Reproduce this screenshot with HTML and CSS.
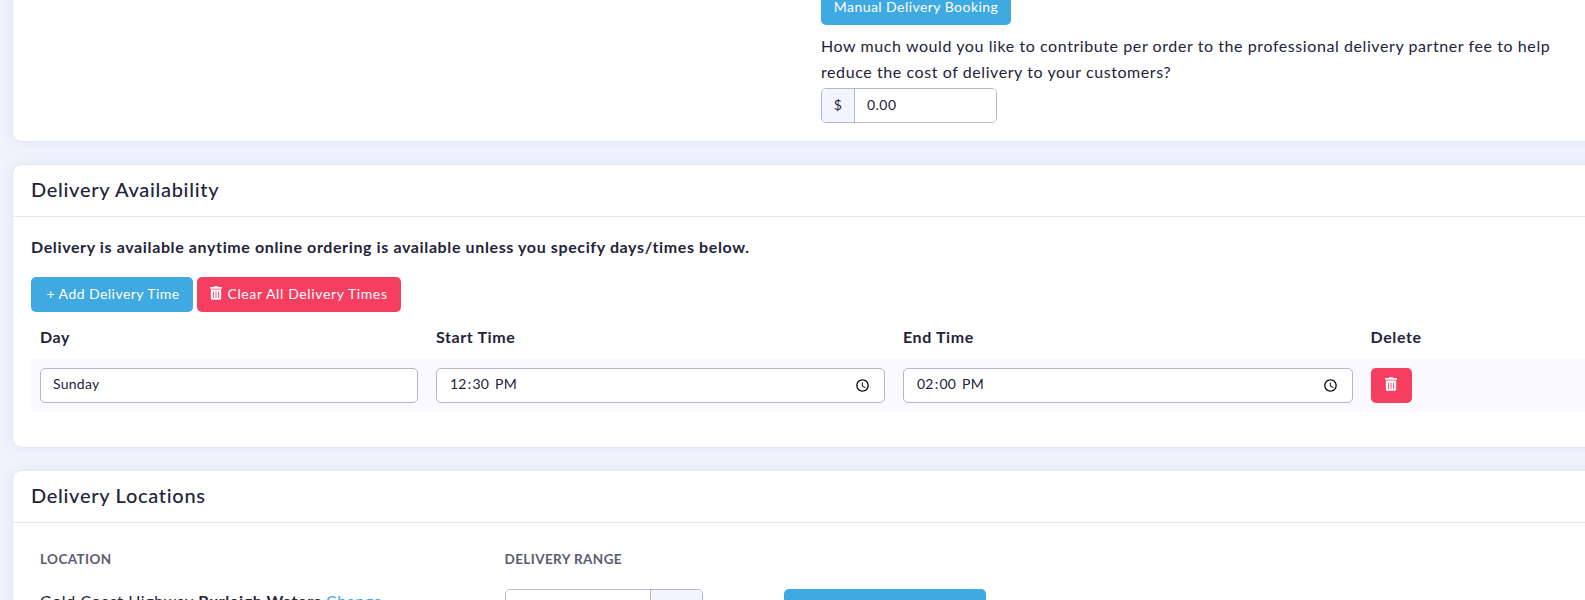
FILE: index.html
```html
<!DOCTYPE html>
<html lang="en">
<head>
<meta charset="utf-8">
<title>Delivery Settings</title>
<link rel="stylesheet" href="styles.css">
</head>
<body>
<main class="page">
  <section class="card card-top">
    <div class="top-body">
      <div class="top-col">
        <button class="btn btn-blue btn-manual">Manual Delivery Booking</button>
        <p class="contribute">How much would you like to contribute per order to the professional delivery partner fee to help reduce the cost of delivery to your customers?</p>
        <div class="input-group">
          <span class="addon">$</span>
          <input class="addon-input" type="text" value="0.00">
        </div>
      </div>
    </div>
  </section>

  <section class="card">
    <h2 class="card-title">Delivery Availability</h2>
    <div class="card-body avail-body">
      <p class="lead">Delivery is available anytime online ordering is available unless you specify days/times below.</p>
      <div class="actions">
        <button class="btn btn-blue btn-add">+ Add Delivery Time</button>
        <button class="btn btn-red btn-clear">
          <svg class="trash" viewBox="0 0 448 512"><path d="M32 464a48 48 0 0 0 48 48h288a48 48 0 0 0 48-48V128H32zm272-256a16 16 0 0 1 32 0v224a16 16 0 0 1-32 0zm-96 0a16 16 0 0 1 32 0v224a16 16 0 0 1-32 0zm-96 0a16 16 0 0 1 32 0v224a16 16 0 0 1-32 0zM432 32H312l-9.4-18.7A24 24 0 0 0 281.1 0H166.8a23.72 23.72 0 0 0-21.4 13.3L136 32H16A16 16 0 0 0 0 48v32a16 16 0 0 0 16 16h416a16 16 0 0 0 16-16V48a16 16 0 0 0-16-16z"/></svg>
          Clear All Delivery Times
        </button>
      </div>
      <div class="grid grid-head">
        <div>Day</div>
        <div>Start Time</div>
        <div>End Time</div>
        <div>Delete</div>
      </div>
      <div class="grid grid-row">
        <input class="field" type="text" value="Sunday">
        <input class="field" type="time" value="12:30">
        <input class="field" type="time" value="14:00">
        <button class="btn btn-red btn-del">
          <svg class="trash" viewBox="0 0 448 512"><path d="M32 464a48 48 0 0 0 48 48h288a48 48 0 0 0 48-48V128H32zm272-256a16 16 0 0 1 32 0v224a16 16 0 0 1-32 0zm-96 0a16 16 0 0 1 32 0v224a16 16 0 0 1-32 0zm-96 0a16 16 0 0 1 32 0v224a16 16 0 0 1-32 0zM432 32H312l-9.4-18.7A24 24 0 0 0 281.1 0H166.8a23.72 23.72 0 0 0-21.4 13.3L136 32H16A16 16 0 0 0 0 48v32a16 16 0 0 0 16 16h416a16 16 0 0 0 16-16V48a16 16 0 0 0-16-16z"/></svg>
        </button>
      </div>
    </div>
  </section>

  <section class="card">
    <h2 class="card-title">Delivery Locations</h2>
    <div class="card-body loc-body">
      <div class="loc-head">
        <div>LOCATION</div>
        <div>DELIVERY RANGE</div>
      </div>
      <div class="loc-row">
        <div class="loc-name">Gold Coast Highway <strong>Burleigh Waters</strong> <a class="link" href="#">Change</a></div>
        <div class="range">
          <input class="range-input" type="text" value="">
          <span class="range-addon">km</span>
        </div>
        <button class="btn btn-blue btn-save">+ Add Delivery Location</button>
      </div>
    </div>
  </section>
</main>
</body>
</html>
```
FILE: styles.css
```css
* { box-sizing: border-box; }
html, body { margin: 0; height: 600px; overflow: hidden; }
body {
  background: #f1f3fd;
  font-family: "Lato", "Liberation Sans", sans-serif;
  font-size: 16px;
  letter-spacing: .58px;
  color: #23233a;
}
.page {
  width: 1640px;
  padding-left: 12px;
  margin-top: -170px;
}
.card {
  background: #fff;
  border: 1px solid #e6e7f5;
  border-radius: 10px;
  box-shadow: 0 0 18px rgba(80, 90, 170, 0.08);
  margin-bottom: 22px;
}
.card-top { height: 312px; }
.top-body { height: 100%; display: flex; justify-content: flex-end; align-items: flex-end; padding: 0 0 18px 0; }
.top-col { width: 818px; }
.btn {
  border: 0;
  border-radius: 5px;
  color: #fff;
  font: inherit;
  font-size: 14px;
  letter-spacing: .45px;
  height: 35px;
  padding: 0 0 2px;
  white-space: nowrap;
  display: inline-flex;
  align-items: center;
  justify-content: center;
}
.btn-blue { background: #3fa9e1; }
.btn-red { background: #f63e60; }
.btn-manual { width: 190px; display: flex; }
.contribute { margin: 8px 0 3px; width: 740px; line-height: 26px; }
.input-group { display: flex; width: 176px; height: 35px; border: 1px solid #b5b5cf; border-radius: 5px; overflow: hidden; font-size: 14px; }
.addon { width: 33px; background: #f2f5fe; border-right: 1px solid #b5b5cf; display: flex; align-items: center; justify-content: center; padding-bottom: 2px; }
.addon-input { border: 0; flex: 1; min-width: 0; padding: 0 12px 2px; font: inherit; letter-spacing: .45px; color: inherit; outline: 0; }
.card-title {
  margin: 0;
  height: 52px;
  line-height: 48px;
  padding-left: 18px;
  font-size: 20px;
  font-weight: 500;
  border-bottom: 1px solid #e6e7f5;
  letter-spacing: .7px;
}
.card-body { padding: 0 18px; }
.avail-body { height: 230px; }
.lead { margin: 0; padding-top: 20px; font-weight: 700; line-height: 20px; letter-spacing: .62px; }
.actions { display: flex; gap: 4px; margin-top: 20px; }
.btn-add { width: 162px; padding-left: 2px; }
.btn-clear { width: 204px; gap: 5px; letter-spacing: .62px; }
.trash { width: 12px; height: 14px; fill: #fff; transform: translateY(-1px); }
.grid { display: grid; grid-template-columns: 378px 449px 449.5px 41px; column-gap: 18px; padding: 0 9px; }
.grid-head { height: 47px; padding-top: 2px; align-items: center; font-weight: 700; letter-spacing: .6px; }
.grid-row { background: #faf9ff; height: 53px; align-items: center; }
.field { height: 35px; width: 100%; border: 1px solid #b5b5cf; border-radius: 5px; background: #fff; padding: 0 12px 4px; font: inherit; font-size: 14px; letter-spacing: .25px; color: inherit; }
.field::-webkit-calendar-picker-indicator { transform: translate(1px, 2px); }
.btn-del { width: 41px; padding: 0; }
.btn-del .trash { transform: translateY(-2px); }
.loc-head { display: grid; grid-template-columns: 464.5px 1fr; padding: 6px 9px 0; height: 66px; align-items: center; font-size: 13.5px; font-weight: 700; color: #5b5b70; letter-spacing: .4px; }
.loc-row { display: grid; grid-template-columns: 464.5px 198px 283px; padding: 0 9px; }
.loc-name { line-height: 24px; }
.link { color: #3fa9e1; text-decoration: none; }
.range { display: flex; height: 35px; border: 1px solid #b5b5cf; border-radius: 5px; overflow: hidden; }
.range-input { flex: 1; min-width: 0; border: 0; }
.range-addon { width: 52px; background: #f2f5fe; border-left: 1px solid #b5b5cf; display: flex; align-items: center; justify-content: center; }
.btn-save { margin-left: 81px; width: 202px; }
```
